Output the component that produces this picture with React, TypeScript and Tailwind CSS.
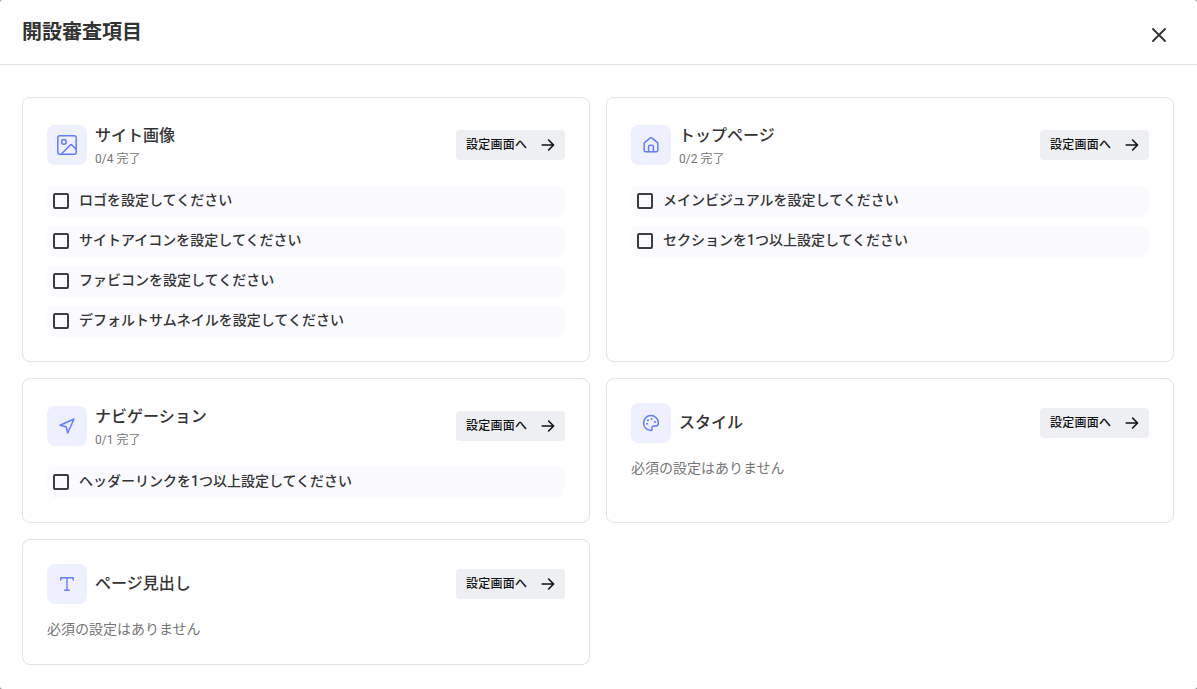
import { useState, type ReactNode } from 'react';

type Section = {
  id: string;
  title: string;
  icon: ReactNode;
  items: string[];
};

const stroke = {
  fill: 'none',
  stroke: 'currentColor',
  strokeLinecap: 'round' as const,
  strokeLinejoin: 'round' as const,
};

function ImageIcon() {
  return (
    <svg width="20" height="20" viewBox="0 0 20 20" {...stroke} strokeWidth="1.5">
      <rect x="0.8" y="0.8" width="18.4" height="18.4" rx="2" />
      <circle cx="6.9" cy="6.9" r="2.3" />
      <path d="M4.2 19.2 13.3 9.9 Q14 9.2 14.7 9.9 L19.2 14.2" />
    </svg>
  );
}

function HomeIcon() {
  return (
    <svg width="16" height="16" viewBox="0 0 16 16" {...stroke} strokeWidth="1.5">
      <path d="M1.2 6.6 Q1.2 5.8 1.8 5.3 L7 1.2 Q8 0.5 9 1.2 L14.2 5.3 Q14.8 5.8 14.8 6.6 V13.3 Q14.8 14.8 13.3 14.8 H2.7 Q1.2 14.8 1.2 13.3 Z" />
      <path d="M5.6 14.6 V9.5 Q5.6 8.2 6.9 8.2 H9.1 Q10.4 8.2 10.4 9.5 V14.6" />
    </svg>
  );
}

function NavigationIcon() {
  return (
    <svg width="16" height="16" viewBox="0 0 16 16" {...stroke} strokeWidth="1.5">
      <path d="M15 1 8.7 15 7.2 8.8 1 7.3 Z" />
    </svg>
  );
}

function PaletteIcon() {
  return (
    <svg width="18" height="18" viewBox="0 0 18 18" {...stroke} strokeWidth="1.5">
      <path d="M9 1.6 A7.4 7.4 0 1 0 9 16.4 Q10 16.4 10 15.2 V13.7 Q10 12 11.7 12 H13.6 Q16.4 12 16.4 9 A7.4 7.4 0 0 0 9 1.6 Z" />
      <g fill="currentColor" stroke="none">
        <circle cx="5.2" cy="9.8" r="1.05" />
        <circle cx="6" cy="6.2" r="1.05" />
        <circle cx="9.6" cy="5" r="1.05" />
        <circle cx="13" cy="8" r="1.05" />
      </g>
    </svg>
  );
}

function TextIcon() {
  return (
    <svg width="16" height="16" viewBox="0 0 16 16" {...stroke} strokeWidth="1.4">
      <path d="M1.8 4 V1.8 H14.2 V4" />
      <path d="M8 1.8 V14.3 M5.6 14.3 H10.4" />
    </svg>
  );
}

const SECTIONS: Section[] = [
  {
    id: 'images',
    title: 'サイト画像',
    icon: <ImageIcon />,
    items: [
      'ロゴを設定してください',
      'サイトアイコンを設定してください',
      'ファビコンを設定してください',
      'デフォルトサムネイルを設定してください',
    ],
  },
  {
    id: 'top',
    title: 'トップページ',
    icon: <HomeIcon />,
    items: ['メインビジュアルを設定してください', 'セクションを1つ以上設定してください'],
  },
  {
    id: 'navigation',
    title: 'ナビゲーション',
    icon: <NavigationIcon />,
    items: ['ヘッダーリンクを1つ以上設定してください'],
  },
  { id: 'style', title: 'スタイル', icon: <PaletteIcon />, items: [] },
  { id: 'heading', title: 'ページ見出し', icon: <TextIcon />, items: [] },
];

function SectionCard({ section }: { section: Section }) {
  const [done, setDone] = useState<string[]>([]);
  const { title, icon, items } = section;

  const toggle = (item: string) => {
    setDone(prev => (prev.includes(item) ? prev.filter(i => i !== item) : [...prev, item]));
  };

  return (
    <section className="flex flex-col rounded-lg border border-[#e2e2e2] p-6">
      <div className={`flex items-center justify-between ${items.length > 0 ? 'mb-[17px] h-[46px]' : 'mb-[15px] h-10'}`}>
        <div className="flex items-center gap-2">
          <div className="flex size-10 items-center justify-center rounded-lg bg-[#eef0ff] text-[#637dfb]">
            {icon}
          </div>
          <div className={items.length > 0 ? 'pt-0.5' : ''}>
            <h2 className="text-base/[26px] font-medium">{title}</h2>
            {items.length > 0 && (
              <p className="text-xs/[21px] text-[#757575]">
                {done.length}/{items.length} 完了
              </p>
            )}
          </div>
        </div>
        <button className="flex h-[30px] w-[109px] items-center justify-between rounded bg-[#eeeff3] px-2.5 text-xs font-medium tracking-[0.02em] text-[#111]">
          設定画面へ
          <svg width="14" height="14" viewBox="0 0 14 14" {...stroke} strokeWidth="1.6">
            <path d="M1.2 7 H12.6 M7.6 2 12.6 7 7.6 12" />
          </svg>
        </button>
      </div>

      {items.length > 0 ? (
        <ul className="flex flex-col gap-2">
          {items.map(item => (
            <li key={item}>
              <label className="flex h-8 items-center gap-2.5 rounded-lg bg-[#fafaff] px-1.5 text-sm font-medium">
                <input
                  type="checkbox"
                  checked={done.includes(item)}
                  onChange={() => toggle(item)}
                  className="size-4 appearance-none rounded-[2px] border-2 border-[#3c3c3c] checked:bg-[#637dfb]"
                />
                <span className="pb-[3px]">{item}</span>
              </label>
            </li>
          ))}
        </ul>
      ) : (
        <p className="mb-px text-sm/5 text-[#757575]">必須の設定はありません</p>
      )}
    </section>
  );
}

export default function App() {
  return (
    <div className="h-[689px] bg-[#999]">
      <main className="h-full overflow-hidden rounded-[3px] bg-white font-[Roboto,'Noto_Sans_CJK_JP',sans-serif] text-[#333]">
        {/* Header */}
        <header className="flex h-[65px] items-center justify-between border-b border-[#e2e2e2] pr-[30px] pl-[22px]">
          <h1 className="text-xl font-bold">開設審査項目</h1>
          <button aria-label="閉じる" className="mt-1.5">
            <svg width="16" height="16" viewBox="0 0 16 16" {...stroke} strokeWidth="1.9">
              <path d="M2 2 14 14 M14 2 2 14" />
            </svg>
          </button>
        </header>

        {/* Review sections */}
        <div className="grid grid-cols-2 gap-4 pt-8 pr-[23px] pl-[22px]">
          {SECTIONS.map(section => (
            <SectionCard key={section.id} section={section} />
          ))}
        </div>
      </main>
    </div>
  );
}
